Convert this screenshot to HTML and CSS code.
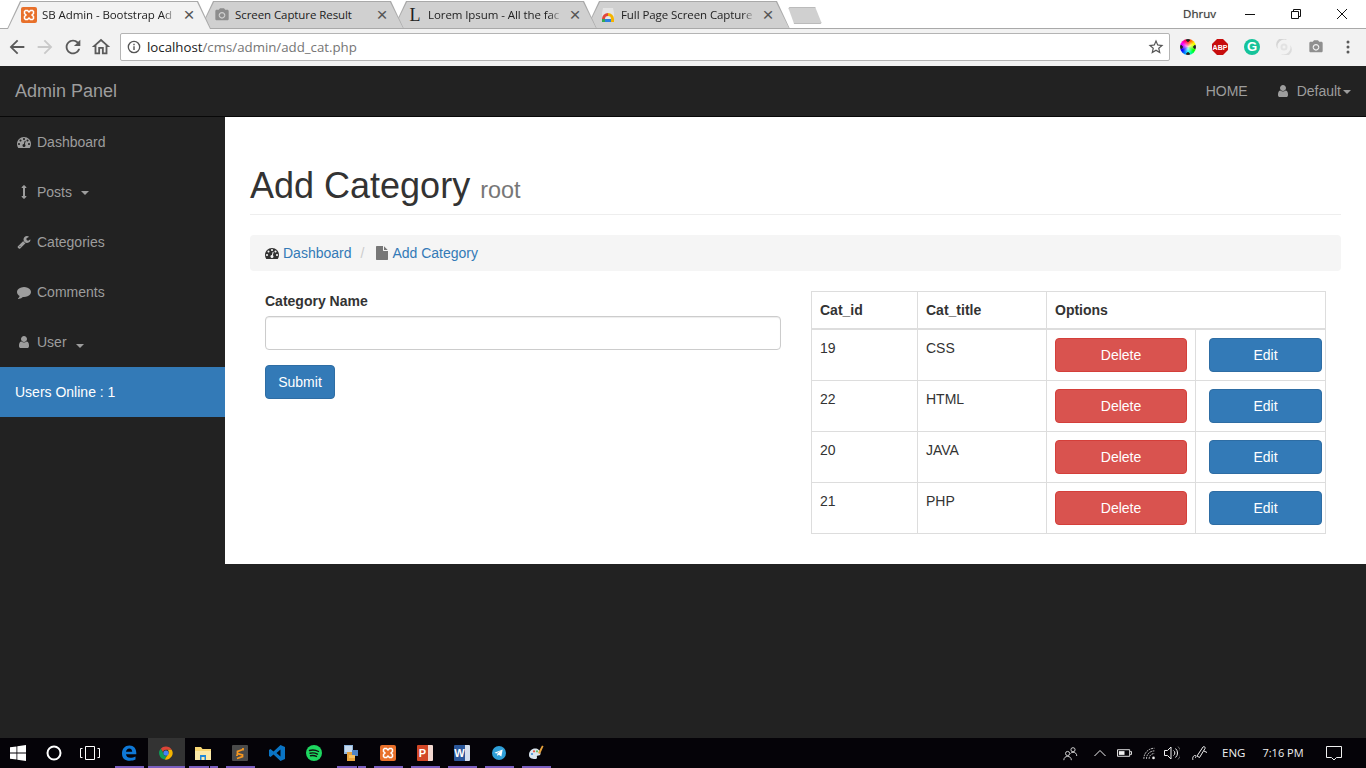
FILE: index.html
```html
<!DOCTYPE html>
<html lang="en">
<head>
    <meta charset="UTF-8">
    <title>SB Admin - Bootstrap Admin Template</title>
    <link rel="stylesheet" href="styles.css">
</head>
<body>

    <!-- icon set -->
    <svg class="icon-defs" xmlns="http://www.w3.org/2000/svg">
        <symbol id="fa-dashboard" viewBox="0 0 1792 1792"><path d="M384 1152q0-53-37.5-90.5t-90.5-37.5-90.5 37.5-37.5 90.5 37.5 90.5 90.5 37.5 90.5-37.5 37.5-90.5zm192-448q0-53-37.5-90.5t-90.5-37.5-90.5 37.5-37.5 90.5 37.5 90.5 90.5 37.5 90.5-37.5 37.5-90.5zm428 481l101-382q6-26-7.5-48.5t-38.5-29.5-48 6.5-30 39.5l-101 382q-60 5-107 43.5t-63 98.5q-20 77 20 146t117 89 146-20 89-117q16-60-6-117t-72-91zm660-33q0-53-37.5-90.5t-90.5-37.5-90.5 37.5-37.5 90.5 37.5 90.5 90.5 37.5 90.5-37.5 37.5-90.5zm-640-640q0-53-37.5-90.5t-90.5-37.5-90.5 37.5-37.5 90.5 37.5 90.5 90.5 37.5 90.5-37.5 37.5-90.5zm448 192q0-53-37.5-90.5t-90.5-37.5-90.5 37.5-37.5 90.5 37.5 90.5 90.5 37.5 90.5-37.5 37.5-90.5zm320 448q0 261-141 483-19 29-54 29h-1402q-35 0-54-29-141-221-141-483 0-182 71-348t191-286 286-191 348-71 348 71 286 191 191 286 71 348z"/></symbol>
        <symbol id="fa-arrows-v" viewBox="0 0 1792 1792"><path d="M1216 320q0 26-19 45t-45 19h-128v1024h128q26 0 45 19t19 45-19 45l-256 256q-19 19-45 19t-45-19l-256-256q-19-19-19-45t19-45 45-19h128v-1024h-128q-26 0-45-19t-19-45 19-45l256-256q19-19 45-19t45 19l256 256q19 19 19 45z"/></symbol>
        <symbol id="fa-wrench" viewBox="0 0 1792 1792"><path d="M448 1472q0-26-19-45t-45-19-45 19-19 45 19 45 45 19 45-19 19-45zm644-420l-682 682q-37 37-90 37-52 0-91-37l-106-108q-38-36-38-90 0-53 38-91l681-681q39 98 114.5 173.5t173.5 114.5zm634-435q0 39-23 106-47 134-164.5 217.5t-258.5 83.5q-185 0-316.5-131.5t-131.5-316.5 131.5-316.5 316.5-131.5q58 0 121.5 16.5t107.5 46.5q16 11 16 28t-16 28l-293 169v224l193 107q5-3 79-48.5t135.5-81 70.5-35.5q15 0 23.5 10t8.5 25z"/></symbol>
        <symbol id="fa-comment" viewBox="0 0 1792 1792"><path d="M1792 896q0 174-120 321.5t-326 233-450 85.5q-70 0-145-8-198 175-460 242-49 14-114 22-17 2-30.5-9t-17.5-29v-1q-3-4-.5-12t2-10 4.5-9.5l6-9 7-8.5 8-9q7-8 31-34.5t34.5-38 31-39.5 32.5-51 27-59 26-76q-157-89-247.5-220t-90.5-281q0-130 71-248.5t191-204.5 286-136.5 348-50.5q244 0 450 85.5t326 233 120 321.5z"/></symbol>
        <symbol id="fa-user" viewBox="0 0 1792 1792"><path d="M1536 1399q0 109-62.5 187t-150.5 78h-854q-88 0-150.5-78t-62.5-187q0-85 8.5-160.5t31.5-152 58.5-131 94-89 134.5-34.5q131 128 313 128t313-128q76 0 134.5 34.5t94 89 58.5 131 31.5 152 8.5 160.5zm-256-887q0 159-112.5 271.5t-271.5 112.5-271.5-112.5-112.5-271.5 112.5-271.5 271.5-112.5 271.5 112.5 112.5 271.5z"/></symbol>
        <symbol id="fa-file" viewBox="0 0 1792 1792"><path d="M1152 512v-472q22 14 36 28l408 408q14 14 28 36h-472zm-128 32q0 40 28 68t68 28h544v1056q0 40-28 68t-68 28h-1344q-40 0-68-28t-28-68v-1600q0-40 28-68t68-28h800v544z"/></symbol>
        <symbol id="camera" viewBox="0 0 24 24"><circle cx="12" cy="12.5" r="3.2"/><path d="M9 2L7.2 4H4C2.900 4 2 4.900 2 6v12c0 1.100.9 2 2 2h16c1.100 0 2-.9 2-2V6c0-1.100-.9-2-2-2h-3.200L15 2H9zm3 15.500c-2.800 0-5-2.200-5-5s2.200-5 5-5 5 2.200 5 5-2.200 5-5 5z"/></symbol>
        <symbol id="xampp" viewBox="0 0 16 16"><rect width="16" height="16" rx="2" fill="#e8702a"/><path d="M4.500 3.500h2L8 5l1.500-1.500h2l1 1v2L11 8l1.500 1.500v2l-1 1h-2L8 11l-1.500 1.500h-2l-1-1v-2L5 8 3.500 6.500v-2z" fill="none" stroke="#fff" stroke-width="1.500"/></symbol>
    </svg>

    <!-- browser window -->
    <header class="browser">
        <div class="tabstrip">
            <div class="tab tab-active">
                <svg class="tab-icon"><use href="#xampp"/></svg>
                <span class="tab-title">SB Admin - Bootstrap Ad</span>
                <span class="tab-close">&times;</span>
            </div>
            <div class="tab">
                <svg class="tab-icon tab-icon-grey" viewBox="0 0 24 24"><use href="#camera"/></svg>
                <span class="tab-title tab-title-full">Screen Capture Result</span>
                <span class="tab-close">&times;</span>
            </div>
            <div class="tab">
                <span class="tab-icon tab-letter">L</span>
                <span class="tab-title">Lorem Ipsum - All the fac</span>
                <span class="tab-close">&times;</span>
            </div>
            <div class="tab">
                <svg class="tab-icon" viewBox="0 0 16 16">
                    <path d="M2 6l1-5h10l1 5v8H2z" fill="#e4e4e4"/>
                    <path d="M2 12a6 6 0 0 1 6-6v3a3 3 0 0 0-3 3z" fill="#e2463a"/>
                    <path d="M8 6a6 6 0 0 1 6 6h-3a3 3 0 0 0-3-3z" fill="#f4b400"/>
                    <path d="M2 12h3v3H2z" fill="#34a853"/>
                    <path d="M5 12h6v3H5z" fill="#2a7de1"/>
                    <path d="M11 12h3v3h-3z" fill="#f4b400"/>
                </svg>
                <span class="tab-title">Full Page Screen Capture</span>
                <span class="tab-close">&times;</span>
            </div>
            <div class="new-tab"></div>
            <div class="window-controls">
                <span class="profile-name">Dhruv</span>
                <svg class="win-btn" viewBox="0 0 12 12"><path d="M1 6.500h10"/></svg>
                <svg class="win-btn" viewBox="0 0 12 12"><path d="M1.500 3.500h7v7h-7zM3.500 3.500v-2h7v7h-2"/></svg>
                <svg class="win-btn" viewBox="0 0 12 12"><path d="M1 1l10 10M11 1L1 11"/></svg>
            </div>
        </div>
        <div class="toolbar">
            <svg class="tool-btn" viewBox="0 0 24 24"><path d="M20 11H7.830l5.590-5.590L12 4l-8 8 8 8 1.410-1.410L7.830 13H20v-2z"/></svg>
            <svg class="tool-btn tool-off" viewBox="0 0 24 24"><path d="M12 4l-1.410 1.410L16.170 11H4v2h12.170l-5.580 5.590L12 20l8-8z"/></svg>
            <svg class="tool-btn" viewBox="0 0 24 24"><path d="M17.650 6.350C16.200 4.900 14.210 4 12 4c-4.420 0-7.990 3.580-7.990 8s3.570 8 7.990 8c3.730 0 6.840-2.550 7.730-6h-2.080c-.82 2.330-3.040 4-5.650 4-3.310 0-6-2.690-6-6s2.690-6 6-6c1.660 0 3.140.69 4.220 1.780L13 11h7V4l-2.350 2.350z"/></svg>
            <svg class="tool-btn" viewBox="0 0 24 24"><path d="M12 5.690l5 4.500V18h-2v-6H9v6H7v-7.810l5-4.500M12 3L2 12h3v8h6v-6h2v6h6v-8h3L12 3z"/></svg>
            <div class="omnibox">
                <svg class="omni-info" viewBox="0 0 16 16"><circle cx="8" cy="8" r="6.500" fill="none" stroke="#555" stroke-width="1.500"/><path d="M7.200 7h1.600v4.500H7.200zM7.200 4.300h1.600v1.600H7.200z" fill="#555"/></svg>
                <span class="omni-url"><span class="omni-host">localhost</span>/cms/admin/add_cat.php</span>
                <svg class="omni-star" viewBox="0 0 24 24"><path d="M22 9.240l-7.190-.62L12 2 9.190 8.630 2 9.240l5.460 4.730L5.820 21 12 17.270 18.180 21l-1.630-7.030L22 9.240zM12 15.400l-3.760 2.270 1-4.280-3.320-2.880 4.380-.38L12 6.100l1.710 4.040 4.380.38-3.320 2.880 1 4.280L12 15.400z"/></svg>
            </div>
            <div class="extensions">
                <span class="ext"><span class="ext-wheel"></span></span>
                <span class="ext">
                    <svg class="ext-svg" viewBox="0 0 16 16"><path d="M5 0h6l5 5v6l-5 5H5l-5-5V5z" fill="#c70d0d"/><text x="8" y="10.700" class="abp-text">ABP</text></svg>
                </span>
                <span class="ext"><span class="ext-grammarly">G</span></span>
                <span class="ext">
                    <svg class="ext-svg" viewBox="0 0 16 16"><path d="M11 1a7 7 0 0 0-9 9 6 6 0 0 1 9-9z" fill="#d4d4d4"/><path d="M5 15a7 7 0 0 0 9-9 6 6 0 0 1-9 9z" fill="#dcdcdc"/><circle cx="8" cy="8" r="2.500" fill="none" stroke="#e2e2e2" stroke-width="2"/></svg>
                </span>
                <span class="ext">
                    <svg class="ext-svg ext-camera" viewBox="0 0 24 24"><use href="#camera"/></svg>
                </span>
                <span class="ext">
                    <svg class="ext-svg ext-menu" viewBox="0 0 16 16"><circle cx="8" cy="3" r="1.500"/><circle cx="8" cy="8" r="1.500"/><circle cx="8" cy="13" r="1.500"/></svg>
                </span>
            </div>
        </div>
    </header>

    <!-- admin page -->
    <div class="site">
        <nav class="navbar">
            <a href="#" class="brand">Admin Panel</a>
            <ul class="nav-right">
                <li><a href="#">HOME</a></li>
                <li><a href="#"><svg class="fa"><use href="#fa-user"/></svg>Default<b class="caret caret-tight"></b></a></li>
            </ul>
        </nav>
        <div class="wrapper">
            <ul class="sidebar">
                <li><a href="#"><svg class="fa"><use href="#fa-dashboard"/></svg>Dashboard</a></li>
                <li><a href="#"><svg class="fa"><use href="#fa-arrows-v"/></svg>Posts<b class="caret"></b></a></li>
                <li><a href="#"><svg class="fa"><use href="#fa-wrench"/></svg>Categories</a></li>
                <li><a href="#"><svg class="fa"><use href="#fa-comment"/></svg>Comments</a></li>
                <li><a href="#"><svg class="fa"><use href="#fa-user"/></svg>User<b class="caret caret-low"></b></a></li>
                <li class="online">Users Online : 1</li>
            </ul>
            <main class="content">
                <h1 class="page-header">Add Category <small>root</small></h1>
                <ol class="breadcrumb">
                    <li><svg class="fa fa-dark"><use href="#fa-dashboard"/></svg><a href="#">Dashboard</a></li>
                    <li class="crumb-sep">/</li>
                    <li><svg class="fa fa-grey"><use href="#fa-file"/></svg><a href="#">Add Category</a></li>
                </ol>
                <div class="row">
                    <form class="col">
                        <label class="form-label" for="cat_title">Category Name</label>
                        <input class="form-control" type="text" id="cat_title">
                        <button class="btn btn-primary btn-submit" type="button">Submit</button>
                    </form>
                    <div class="col col-table">
                        <table class="table">
                            <colgroup>
                                <col class="col-id">
                                <col class="col-title">
                                <col class="col-delete">
                                <col class="col-edit">
                            </colgroup>
                            <thead>
                                <tr><th>Cat_id</th><th>Cat_title</th><th colspan="2">Options</th></tr>
                            </thead>
                            <tbody>
                                <tr>
                                    <td>19</td><td>CSS</td>
                                    <td><a href="#" class="btn btn-danger btn-delete">Delete</a></td>
                                    <td class="cell-edit"><a href="#" class="btn btn-primary btn-edit">Edit</a></td>
                                </tr>
                                <tr>
                                    <td>22</td><td>HTML</td>
                                    <td><a href="#" class="btn btn-danger btn-delete">Delete</a></td>
                                    <td class="cell-edit"><a href="#" class="btn btn-primary btn-edit">Edit</a></td>
                                </tr>
                                <tr>
                                    <td>20</td><td>JAVA</td>
                                    <td><a href="#" class="btn btn-danger btn-delete">Delete</a></td>
                                    <td class="cell-edit"><a href="#" class="btn btn-primary btn-edit">Edit</a></td>
                                </tr>
                                <tr>
                                    <td>21</td><td>PHP</td>
                                    <td><a href="#" class="btn btn-danger btn-delete">Delete</a></td>
                                    <td class="cell-edit"><a href="#" class="btn btn-primary btn-edit">Edit</a></td>
                                </tr>
                            </tbody>
                        </table>
                    </div>
                </div>
            </main>
        </div>
    </div>

    <!-- windows taskbar -->
    <footer class="taskbar">
        <div class="task-system">
            <span class="task-cell">
                <svg class="task-icon" viewBox="0 0 16 16"><path d="M0 2.300l6.500-.9v6.200H0zM7.300 1.300L16 0v7.600H7.300zM0 8.400h6.500v6.200L0 13.700zM7.300 8.400H16V16l-8.700-1.300z" fill="#fff"/></svg>
            </span>
            <span class="task-cell">
                <svg class="task-icon" viewBox="0 0 16 16"><circle cx="8" cy="8" r="6.500" fill="none" stroke="#fff" stroke-width="2"/></svg>
            </span>
            <span class="task-cell">
                <svg class="task-icon task-view" viewBox="0 0 20 14"><path d="M5.500 .5h9v13h-9zM2.500 2.500h-2v9h2M17.500 2.500h2v9h-2" fill="none" stroke="#fff"/></svg>
            </span>
        </div>
        <div class="task-apps">
            <span class="task-cell task-open">
                <svg class="task-icon" viewBox="0 0 16 16"><path d="M1 8.500C1 3.500 4 .5 8.500.5c4.300 0 6.800 3 6.800 7.500v1.300H5c.2 2.400 2 3.500 4.300 3.500 2 0 3.600-.5 5.200-1.400v3.200c-1.500.8-3.500 1.200-5.700 1.200C3.900 15.800 1 13.300 1 8.500zM5 6.800h6.200C11.100 4.700 10 3.500 8.200 3.500 6.500 3.500 5.300 4.800 5 6.800z" fill="#0f78d6"/></svg>
            </span>
            <span class="task-cell task-open task-active">
                <svg class="task-icon task-icon-small" viewBox="0 0 16 16">
                    <path d="M8 .5a7.500 7.500 0 0 1 6.500 3.700H8a3.800 3.800 0 0 0-3.600 2.600L2 3A7.500 7.500 0 0 1 8 .5z" fill="#db4437"/>
                    <path d="M2 3l2.900 5.300a3.800 3.800 0 0 0 3.900 3.500l-2.200 3.600A7.500 7.500 0 0 1 2 3z" fill="#0f9d58"/>
                    <path d="M14.500 4.200A7.500 7.500 0 0 1 6.600 15.400l3.300-5.500a3.800 3.800 0 0 0-.1-5.700z" fill="#f4b400"/>
                    <circle cx="8" cy="8" r="3" fill="#4285f4"/>
                </svg>
            </span>
            <span class="task-cell task-open task-stack">
                <svg class="task-icon" viewBox="0 0 16 16"><path d="M0 2h6l1.500 2H16v11H0z" fill="#f8d775"/><path d="M0 6h16v9H0z" fill="#fbe9a8"/><path d="M5 10h6v5H9.500v-3h-3v3H5z" fill="#1e88d8"/></svg>
            </span>
            <span class="task-cell task-open">
                <svg class="task-icon" viewBox="0 0 16 16"><rect width="16" height="16" rx="1" fill="#4a4a4a"/><path d="M11 4.500L5.500 6.500v2l5 1.500v1.500L5 13.500M11 3v2.500M5 9.500V11" fill="none" stroke="#f89820" stroke-width="1.800"/></svg>
            </span>
            <span class="task-cell">
                <svg class="task-icon" viewBox="0 0 16 16"><path d="M11.500 0L16 2v12l-4.500 2L4.500 9.500 1.500 12 0 11V5l1.500-1 3 2.500zM11.500 4.500L7.500 8l4 3.500z" fill="#0a74c4"/></svg>
            </span>
            <span class="task-cell">
                <svg class="task-icon" viewBox="0 0 16 16"><circle cx="8" cy="8" r="8" fill="#1ed760"/><path d="M3.500 5.500c3-.8 6-.6 9 1M4 8.200c2.500-.6 5-.4 7.500.9M4.500 10.700c2-.4 4-.3 6 .7" fill="none" stroke="#111" stroke-width="1.400" stroke-linecap="round"/></svg>
            </span>
            <span class="task-cell task-open task-stack">
                <svg class="task-icon" viewBox="0 0 16 16"><path d="M1 0h9v9H1z" fill="#8db4dc"/><path d="M2 2h7M2 4h7M2 6h7" stroke="#fff"/><path d="M4 7h8v9H4z" fill="#e8a33c"/><path d="M9 5h6v6H9z" fill="#4f84c4"/><path d="M6 10h6v3H6z" fill="#f6c15f"/></svg>
            </span>
            <span class="task-cell task-open">
                <svg class="task-icon"><use href="#xampp"/></svg>
            </span>
            <span class="task-cell task-open">
                <span class="office-icon office-ppt">P</span>
            </span>
            <span class="task-cell task-open">
                <span class="office-icon office-word">W</span>
            </span>
            <span class="task-cell task-open">
                <svg class="task-icon task-icon-small" viewBox="0 0 16 16"><circle cx="8" cy="8" r="8" fill="#2e9fd8"/><path d="M2.800 7.800l9.400-3.700-1.500 8-3-2.200-1.500 1.500-.3-2.500 4.200-3.600-5.300 3.300z" fill="#fff"/></svg>
            </span>
            <span class="task-cell task-open">
                <svg class="task-icon" viewBox="0 0 16 16"><path d="M1 10c0-4 3-6.500 6-6.500s5.500 2 5.500 5c0 2-1.500 2-2.500 2s-1.500 1-1 2c.3.900-.5 1.500-2 1.500-3 0-6-1-6-4z" fill="#d9e4ec"/><circle cx="4" cy="9" r="1.100" fill="#3f8fd6"/><circle cx="6" cy="6.300" r="1.100" fill="#e8503a"/><circle cx="9" cy="6.300" r="1.100" fill="#5cb85c"/><path d="M10 8l4-7.500 1.500.8L12 9z" fill="#e8a33c"/></svg>
            </span>
        </div>
        <div class="tray">
            <svg class="tray-icon tray-people" viewBox="0 0 18 16"><circle cx="5.500" cy="8" r="2.500"/><path d="M1 16c0-3 2-4.500 4.500-4.500S10 13 10 16"/><circle cx="12" cy="3.500" r="2.500"/><path d="M9 8c.7-1 1.700-1.500 3-1.500 2.500 0 4.500 1.500 4.500 4.500"/></svg>
            <svg class="tray-icon tray-chevron" viewBox="0 0 12 8"><path d="M.5 7L6 1.500 11.500 7"/></svg>
            <svg class="tray-icon tray-battery" viewBox="0 0 16 10"><path d="M.5 1.500h13v7H.5zM14 3.500h1.500v3H14"/><rect class="tray-fill" x="2" y="3" width="6" height="4"/></svg>
            <svg class="tray-icon tray-wifi" viewBox="0 0 16 14"><path d="M1 13A12 12 0 0 1 13 1M4 13a9 9 0 0 1 9-9M7 13a6 6 0 0 1 6-6" stroke-dasharray="2 1"/><circle class="tray-fill" cx="12" cy="12" r="1.500"/></svg>
            <svg class="tray-icon tray-volume" viewBox="0 0 16 14"><path d="M.5 4.500h3L7 1v12L3.500 9.500h-3zM9.500 4.500a3 3 0 0 1 0 5M11.500 2.500a6 6 0 0 1 0 9"/><path class="tray-dim" d="M14 .5a9 9 0 0 1 0 13"/></svg>
            <svg class="tray-icon tray-pen" viewBox="0 0 16 16"><path d="M1 15c-1-2 .5-5 2.500-4.500 1 .3.500 2-.5 2.500M5 11L11 2c1-1 2.500 0 2 1.500L7.500 12.500zM12 6l3 1.500"/></svg>
            <span class="tray-lang">ENG</span>
            <span class="tray-time">7:16 PM</span>
            <svg class="tray-icon tray-note" viewBox="0 0 16 16"><path d="M.5 1.500h15v11h-5l-2.500 2.500-2.500-2.500h-5z"/></svg>
        </div>
    </footer>

</body>
</html>
```

FILE: styles.css
```css
* {
    margin: 0;
    padding: 0;
    box-sizing: border-box;
}

html, body {
    height: 100%;
    overflow: hidden;
}

body {
    display: flex;
    flex-direction: column;
    font-family: "Liberation Sans", Arial, sans-serif;
    font-size: 14px;
    line-height: 20px;
    color: #333;
    background-color: #222;
}

a {
    text-decoration: none;
    color: #337ab7;
}

ul, ol {
    list-style: none;
}

.icon-defs {
    display: none;
}

/* browser */

.browser {
    flex: none;
    height: 66px;
    font-family: "Open Sans", "Noto Sans", sans-serif;
    background-color: #f2f2f2;
}

.tabstrip {
    position: relative;
    display: flex;
    align-items: flex-end;
    height: 29px;
    padding-left: 7px;
    background-color: #fff;
    box-shadow: inset 0 -1px 0 #a9a9a9;
}

.tab {
    position: relative;
    display: flex;
    align-items: center;
    flex: none;
    width: 204px;
    height: 28px;
    margin-right: -11px;
    padding-left: 14px;
    font-size: 11.500px;
    color: #222;
    background-color: #a9a9a9;
    clip-path: polygon(0 100%, 13px 0, calc(100% - 13px) 0, 100% 100%);
}

.tab::before {
    content: "";
    position: absolute;
    top: 1px;
    left: 1px;
    right: 1px;
    bottom: 1px;
    background-color: #d0d0d0;
    clip-path: polygon(0 100%, 13px 0, calc(100% - 13px) 0, 100% 100%);
}

.tab:nth-child(1) { z-index: 4; }
.tab:nth-child(2) { z-index: 3; }
.tab:nth-child(3) { z-index: 2; }
.tab:nth-child(4) { z-index: 1; }

.tab-active::before {
    bottom: 0;
    background-color: #f2f2f2;
}

.tab-icon {
    position: relative;
    flex: none;
    width: 16px;
    height: 16px;
    margin-right: 5px;
}

.tab-icon-grey {
    fill: #8c8c8c;
}

.tab-letter {
    font-family: "Liberation Serif", serif;
    font-size: 18px;
    line-height: 16px;
    text-align: center;
    color: #222;
}

.tab-title {
    position: relative;
    flex: none;
    width: 135px;
    margin-right: 6px;
    white-space: nowrap;
    letter-spacing: -0.08px;
    -webkit-mask-image: linear-gradient(to left, transparent, #000 14px);
    mask-image: linear-gradient(to left, transparent, #000 14px);
}

.tab-title-full {
    -webkit-mask-image: none;
    mask-image: none;
}

.tab-close {
    position: relative;
    flex: none;
    width: 12px;
    font-family: "Liberation Sans", sans-serif;
    font-size: 19px;
    line-height: 16px;
    text-align: center;
    color: #555;
}

.new-tab {
    position: relative;
    flex: none;
    width: 34px;
    height: 17px;
    margin: 0 0 5px 9px;
    background-color: #d0d0d0;
    border: 1px solid #bbb;
    border-radius: 2px;
    clip-path: polygon(0 0, 80% 0, 100% 100%, 18% 100%);
}

.window-controls {
    display: flex;
    align-items: center;
    margin: 0 0 auto auto;
    height: 27px;
}

.profile-name {
    margin-right: 28px;
    font-size: 11.500px;
    color: #333;
    text-shadow: 0 0 2px #fff, 0 0 1px #777;
}

.win-btn {
    width: 12px;
    height: 12px;
    margin-right: 34px;
    fill: none;
    stroke: #111;
    stroke-width: 1;
}

.win-btn:last-child {
    margin-right: 18px;
}

.toolbar {
    display: flex;
    align-items: center;
    height: 37px;
    padding: 0 2px 1px 3px;
}

.tool-btn {
    flex: none;
    width: 28px;
    height: 22px;
    fill: #5a5a5a;
}

.tool-off {
    fill: #c9c9c9;
}

.omnibox {
    display: flex;
    align-items: center;
    flex: 1;
    height: 28px;
    margin: 0 2px 0 5px;
    padding: 0 4px 0 6px;
    background-color: #fff;
    border: 1px solid #b4b4b4;
    border-radius: 2px;
}

.omni-info {
    flex: none;
    width: 14px;
    height: 14px;
    margin-right: 6px;
}

.omni-url {
    flex: 1;
    font-size: 13.250px;
    color: #757575;
}

.omni-host {
    color: #222;
}

.omni-star {
    flex: none;
    width: 18px;
    height: 18px;
    fill: #555;
}

.extensions {
    display: flex;
    flex: none;
}

.ext {
    display: flex;
    align-items: center;
    justify-content: center;
    width: 32px;
    height: 28px;
}

.ext-svg {
    width: 16px;
    height: 16px;
}

.ext-wheel {
    width: 16px;
    height: 16px;
    border-radius: 50%;
    background:
        radial-gradient(circle at 50% 6%, #222 1.5px, transparent 2px),
        radial-gradient(circle at 50% 94%, #222 1.5px, transparent 2px),
        radial-gradient(circle at 6% 50%, #222 1.5px, transparent 2px),
        radial-gradient(circle at 94% 50%, #222 1.5px, transparent 2px),
        radial-gradient(rgba(255, 255, 255, 0.8), transparent 55%),
        conic-gradient(#f00, #ff0, #0f0, #0ff, #00f, #f0f, #f00);
}

.abp-text {
    font-family: "Liberation Sans", sans-serif;
    font-size: 7px;
    font-weight: bold;
    fill: #fff;
    text-anchor: middle;
}

.ext-grammarly {
    width: 16px;
    height: 16px;
    font-family: "Liberation Sans", sans-serif;
    font-size: 13px;
    font-weight: bold;
    line-height: 16px;
    text-align: center;
    color: #fff;
    background-color: #15c39a;
    border-radius: 50%;
}

.ext-camera {
    fill: #8f8f8f;
}

.ext-menu {
    fill: #5a5a5a;
}

/* admin page */

.site {
    display: flex;
    flex-direction: column;
    flex: 1;
    min-height: 0;
    background-color: #222;
}

.navbar {
    display: flex;
    justify-content: space-between;
    align-items: center;
    flex: none;
    height: 51px;
    padding: 0 15px;
    background-color: #222;
    border-bottom: 1px solid #080808;
}

.brand {
    font-size: 18px;
    color: #9d9d9d;
}

.nav-right {
    display: flex;
    gap: 28px;
}

.nav-right a {
    color: #9d9d9d;
}

.nav-right .fa {
    margin-right: 7px;
}

.fa {
    width: 14px;
    height: 14px;
    margin-right: 6px;
    vertical-align: -2px;
    fill: #9d9d9d;
}

.caret {
    display: inline-block;
    margin-left: 9px;
    vertical-align: 2px;
    border-top: 4px solid #9d9d9d;
    border-left: 4px solid transparent;
    border-right: 4px solid transparent;
}

.caret-tight {
    margin-left: 2px;
}

.caret-low {
    vertical-align: -1px;
}

.wrapper {
    display: flex;
    align-items: flex-start;
    flex: 1;
}

.sidebar {
    flex: none;
    width: 225px;
}

.sidebar a {
    display: block;
    height: 50px;
    padding: 15px 17px;
    color: #9d9d9d;
}

.online {
    height: 50px;
    padding: 15px;
    color: #fff;
    background-color: #337ab7;
}

.content {
    flex: 1;
    min-width: 0;
    padding: 49px 25px 30px;
    background-color: #fff;
}

.page-header {
    padding-bottom: 3px;
    margin-bottom: 20px;
    font-size: 36px;
    font-weight: 500;
    line-height: 39.600px;
    color: #333;
    border-bottom: 1px solid #eee;
}

.page-header small {
    font-size: 65%;
    font-weight: 400;
    color: #777;
}

.breadcrumb {
    display: flex;
    height: 36px;
    padding: 8px 15px;
    margin-bottom: 20px;
    background-color: #f5f5f5;
    border-radius: 4px;
}

.crumb-sep {
    padding: 0 11px 0 9px;
    color: #ccc;
}

.fa-dark {
    margin-right: 4px;
    fill: #333;
}

.fa-grey {
    margin-right: 3px;
    fill: #777;
}

.row {
    display: grid;
    grid-template-columns: 546px 1fr;
}

.col {
    padding: 0 15px;
}

.col-table {
    padding-right: 16px;
}

.form-label {
    display: block;
    margin-bottom: 5px;
    font-weight: bold;
}

.form-control {
    display: block;
    width: 100%;
    height: 34px;
    margin-bottom: 15px;
    padding: 6px 12px;
    background-color: #fff;
    border: 1px solid #ccc;
    border-radius: 4px;
    box-shadow: inset 0 1px 1px rgba(0, 0, 0, 0.075);
}

.btn {
    display: block;
    height: 34px;
    padding: 6px 12px;
    font-family: inherit;
    font-size: 14px;
    line-height: 20px;
    text-align: center;
    color: #fff;
    border: 1px solid transparent;
    border-radius: 4px;
}

.btn-primary {
    background-color: #337ab7;
    border-color: #2e6da4;
}

.btn-danger {
    background-color: #d9534f;
    border-color: #d43f3a;
}

.btn-submit {
    width: 70px;
}

.btn-delete {
    width: 132px;
}

.btn-edit {
    width: 113px;
    margin-left: 13px;
}

.table {
    width: 100%;
    table-layout: fixed;
    border-collapse: collapse;
}

.col-id { width: 106px; }
.col-title { width: 129px; }
.col-delete { width: 149px; }
.col-edit { width: 130px; }

.table th, .table td {
    padding: 8px;
    text-align: left;
    vertical-align: top;
    border: 1px solid #ddd;
}

.table thead th {
    border-bottom-width: 2px;
}

.table .cell-edit {
    padding: 8px 0;
}

/* taskbar */

.taskbar {
    display: flex;
    align-items: stretch;
    flex: none;
    height: 30px;
    font-family: "Open Sans", "Noto Sans", sans-serif;
    background-color: #050308;
}

.task-system {
    display: flex;
    flex: none;
    margin-right: 2.500px;
}

.task-system .task-cell {
    width: 36px;
}

.task-apps {
    display: flex;
    flex: none;
}

.task-cell {
    position: relative;
    display: flex;
    align-items: center;
    justify-content: center;
    width: 37px;
}

.task-open::after {
    content: "";
    position: absolute;
    left: 4px;
    right: 4px;
    bottom: 0;
    height: 2px;
    background-color: #7a5fc0;
}

.task-stack::before {
    content: "";
    position: absolute;
    z-index: 1;
    right: 12px;
    bottom: 0;
    width: 1px;
    height: 2px;
    background-color: #050308;
}

.task-active {
    background-color: #333;
}

.task-active::after {
    left: 0;
    right: 0;
}

.task-icon {
    width: 16px;
    height: 16px;
}

.task-icon-small {
    width: 14px;
    height: 14px;
}

.task-view {
    width: 20px;
    height: 14px;
}

.office-icon {
    width: 16px;
    height: 16px;
    padding-right: 5px;
    font-family: "Liberation Sans", sans-serif;
    font-size: 11px;
    font-weight: bold;
    line-height: 16px;
    text-align: center;
    color: #fff;
    border-radius: 1px;
}

.office-ppt {
    background: linear-gradient(to right, #d24726 11px, #f3d8d0 11px);
}

.office-word {
    background: linear-gradient(to right, #2b579a 11px, #d5dfee 11px);
}

.tray {
    position: relative;
    flex: 1;
    display: flex;
    align-items: center;
    color: #f0f0f0;
}

.tray-icon {
    flex: none;
    fill: none;
    stroke: #f0f0f0;
    stroke-width: 1;
}

.tray-fill {
    fill: #f0f0f0;
    stroke: none;
}

.tray-dim {
    stroke: #666;
}

.tray-people {
    width: 15px;
    height: 15px;
    margin-left: 508.500px;
}

.tray-chevron {
    width: 12px;
    height: 8px;
    margin-left: 16px;
}

.tray-battery {
    width: 15px;
    height: 10px;
    margin-left: 11px;
}

.tray-wifi {
    width: 14px;
    height: 13px;
    margin-left: 11px;
}

.tray-volume {
    width: 16px;
    height: 14px;
    margin-left: 7px;
}

.tray-pen {
    width: 16px;
    height: 16px;
    margin-left: 12px;
}

.tray-lang {
    margin-left: 14px;
    font-size: 11.500px;
}

.tray-time {
    margin-left: 17px;
    font-size: 11px;
}

.tray-note {
    width: 16px;
    height: 16px;
    margin-left: 22px;
}
```
